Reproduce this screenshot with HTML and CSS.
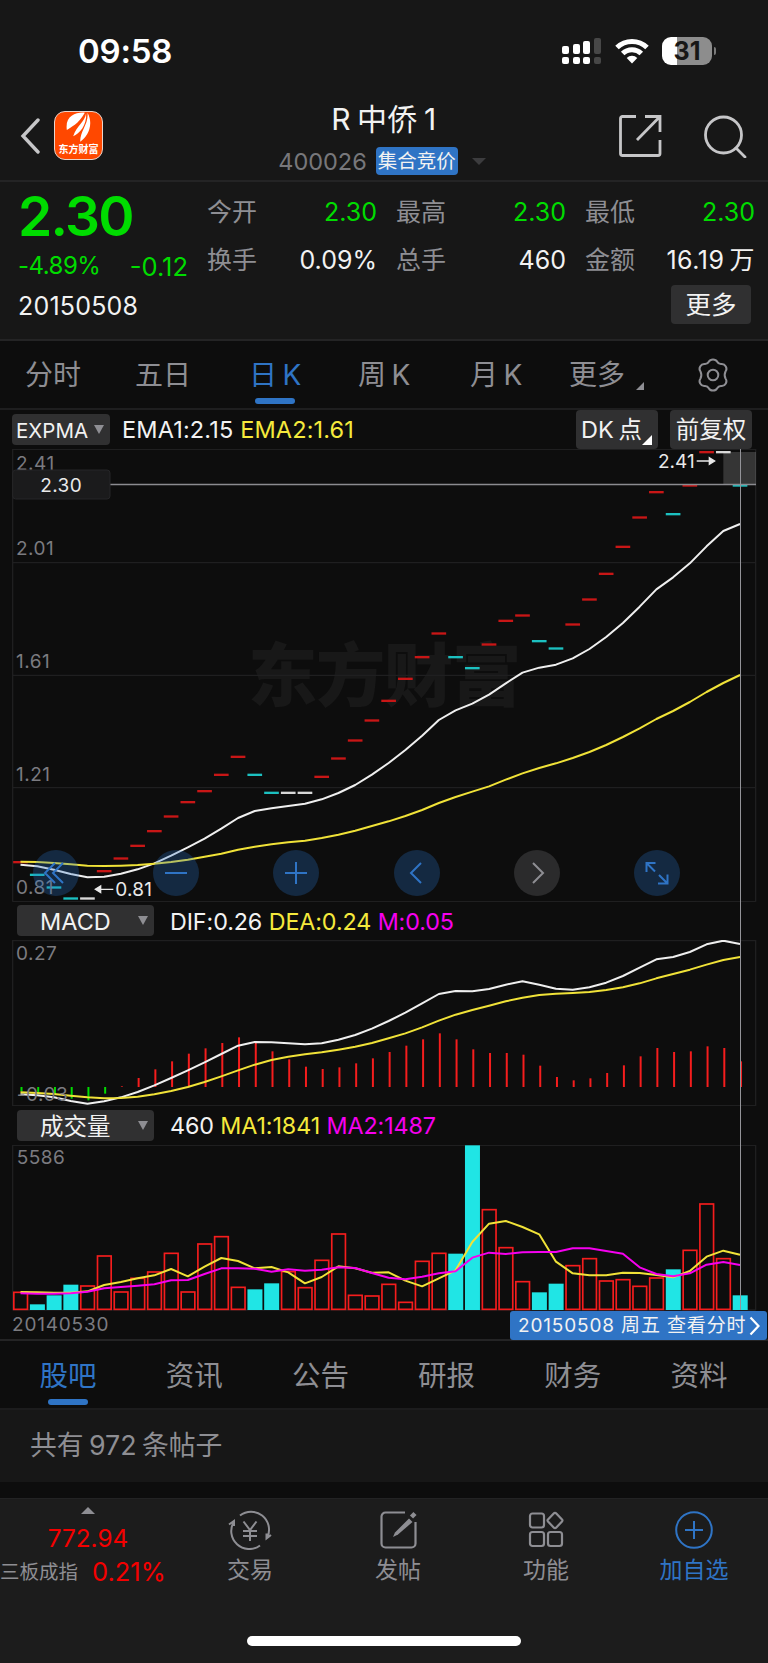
FILE: index.html
```html
<!DOCTYPE html>
<html lang="zh-CN">

<head>
    <meta charset="UTF-8">
    <meta name="viewport" content="width=device-width, initial-scale=1.0">
    <title>R中侨1 400026</title>
    <link rel="stylesheet" href="styles.css">
</head>

<body>
    <header class="top">
        <div class="status-bar">
            <span class="clock">09:58</span>
            <div class="status-icons">
                <svg class="signal" width="40" height="28" viewBox="0 0 40 28">
                    <g fill="#fff">
                        <rect x="0" y="9" width="7" height="8" rx="2" />
                        <rect x="11" y="7" width="7" height="10" rx="2" />
                        <rect x="21" y="4" width="7" height="13" rx="2" />
                        <rect x="0" y="20" width="7" height="7" rx="2" />
                        <rect x="11" y="20" width="7" height="7" rx="2" />
                        <rect x="21" y="20" width="7" height="7" rx="2" />
                    </g>
                    <g fill="#474747">
                        <rect x="32" y="1" width="7" height="16" rx="2" />
                        <rect x="32" y="20" width="7" height="7" rx="2" />
                    </g>
                </svg>
                <svg class="wifi" width="34" height="26" viewBox="0 0 34 26">
                    <g fill="none" stroke="#fff" stroke-width="5">
                        <path d="M2 9.5a21.5 21.5 0 0 1 30 0" />
                        <path d="M7.7 15.6a13.2 13.2 0 0 1 18.6 0" />
                    </g>
                    <path fill="#fff" d="M17 25.5l-5.3-5.6a7.6 7.6 0 0 1 10.6 0z" />
                </svg>
                <div class="battery"><span>31</span></div>
            </div>
        </div>
        <div class="nav">
            <div class="nav-left">
                <svg width="20" height="36" viewBox="0 0 20 36">
                    <path d="M18 2L3 18l15 16" fill="none" stroke="#c6c6c8" stroke-width="3.4" stroke-linecap="round" />
                </svg>
                <div class="logo">
                    <svg width="25" height="30" viewBox="64 36 74 90" fill="#fff">
                        <path d="M120 38C92 36 60 48 66 90C78 80 100 74 120 38z" />
                        <path d="M124 40C120 66 96 76 85 109C104 100 126 78 124 40z" />
                        <path d="M128 38C132 72 106 92 106 125C128 112 148 74 128 38z" />
                    </svg>
                    <span>东方财富</span>
                </div>
            </div>
            <div class="nav-title">
                <h1>R<i></i>中侨<i></i>1</h1>
                <div class="code-line">
                    <span class="code">400026</span>
                    <span class="badge">集合竞价</span>
                    <span class="down"></span>
                </div>
            </div>
            <div class="nav-right">
                <svg width="44" height="44" viewBox="0 0 44 44" fill="none" stroke="#c6c6c8" stroke-width="2.8">
                    <path d="M18 2.5H4.5a2 2 0 0 0-2 2v35a2 2 0 0 0 2 2H40a2 2 0 0 0 2-2V26" />
                    <path d="M27 2.5h15V18M42 2.5L19 26" />
                </svg>
                <svg width="44" height="44" viewBox="0 0 44 44" fill="none" stroke="#c6c6c8" stroke-width="2.8">
                    <circle cx="20.5" cy="21" r="18" />
                    <path d="M33 34l9 9" stroke-linecap="round" />
                </svg>
            </div>
        </div>
    </header>

    <section class="quote">
        <div class="price-box">
            <div class="price">2.30</div>
            <div class="change"><span>-4.89%</span><span class="diff">-0.12</span></div>
            <div class="date">20150508</div>
        </div>
        <div class="quote-info">
            <dl class="stats">
                <div><dt>今开</dt><dd class="green">2.30</dd></div>
                <div><dt>最高</dt><dd class="green">2.30</dd></div>
                <div><dt>最低</dt><dd class="green">2.30</dd></div>
                <div><dt>换手</dt><dd>0.09%</dd></div>
                <div><dt>总手</dt><dd>460</dd></div>
                <div><dt>金额</dt><dd class="amount">16.19<i></i>万</dd></div>
            </dl>
            <button class="more-btn">更多</button>
        </div>
    </section>

    <nav class="period-tabs">
        <a>分时</a>
        <a>五日</a>
        <a class="active">日<i></i>K</a>
        <a>周<i></i>K</a>
        <a>月<i></i>K</a>
        <a>更多<b class="corner"></b></a>
        <a class="gear">
            <svg width="34" height="34" viewBox="0 0 34 34" fill="none" stroke="#8e8e93" stroke-width="2">
                <path d="M12.800 3.800Q14 1.500 17 1.500T21.200 3.800Q22.500 6.300 25.500 6Q28.300 5.800 29.800 8.500T29.500 13.500Q27.800 17 29.500 20.500Q31.300 22.800 29.800 25.500T25.500 28Q22.500 27.700 21.200 30.200Q20 32.500 17 32.500T12.800 30.200Q11.500 27.700 8.500 28Q5.700 28.200 4.200 25.500T4.500 20.500Q6.200 17 4.500 13.500Q2.700 11.200 4.200 8.500T8.500 6Q11.500 6.300 12.800 3.800z" />
                <circle cx="17" cy="17" r="5.300" />
            </svg>
        </a>
    </nav>

    <main class="charts">
        <div class="bar bar-main">
            <button class="select select-main">EXPMA<b class="tri"></b></button>
            <p class="legend"><span>EMA1:2.15</span> <span class="yellow">EMA2:1.61</span></p>
            <button class="tool">DK<i></i>点<b class="corner"></b></button>
            <button class="tool">前复权</button>
        </div>
        <div class="price-chart">
            <svg id="price" width="768" height="453" viewBox="0 27 2304 1359">
                <text class="watermark" x="744" y="783" textLength="820">东方财富</text>
                <path class="grid" d="M38 27V1385M2267 27V1385M38 28H2267M38 368H2267M38 706H2267M38 1043H2267M38 1385H2267" />
                <g class="data"></g>
                <g class="axis">
                    <text x="48" y="90">2.41</text>
                    <text x="48" y="346">2.01</text>
                    <text x="48" y="685">1.61</text>
                    <text x="48" y="1024">1.21</text>
                    <text x="48" y="1363">0.81</text>
                </g>
                <rect x="2170" y="36" width="98" height="98" fill="#fff" fill-opacity=".17" />
                <path d="M330 133.500H2268" stroke="#8b8b90" stroke-width="4.500" />
                <rect x="38" y="90" width="292" height="87" rx="9" fill="#1b1b1c" stroke="#262628" stroke-width="3" />
                <g class="mark">
                    <text x="121" y="155" textLength="124">2.30</text>
                    <text x="1974" y="84" textLength="110">2.41</text>
                    <path d="M2090 63h38v-10l16 10-16 10v-10" />
                    <text x="346" y="1369" textLength="110">0.81</text>
                    <path d="M340 1348h-38v-10l-16 10 16 10v-10" />
                </g>
            </svg>
            <div class="controls">
                <button>
                    <svg viewBox="0 0 46 46"><path d="M22 13L12 23l10 10M30 13L20 23l10 10" /></svg>
                </button>
                <button>
                    <svg viewBox="0 0 46 46"><path d="M12 23h22" /></svg>
                </button>
                <button>
                    <svg viewBox="0 0 46 46"><path d="M12 23h22M23 12v22" /></svg>
                </button>
                <button>
                    <svg viewBox="0 0 46 46"><path d="M27 13L17 23l10 10" /></svg>
                </button>
                <button class="disabled">
                    <svg viewBox="0 0 46 46"><path d="M19 13l10 10-10 10" /></svg>
                </button>
                <button>
                    <svg viewBox="0 0 46 46"><path d="M12.500 22V13h9M12.500 13l8.500 8.500M24 33.500h9.500v-9M33.500 33.500L25 25" /></svg>
                </button>
            </div>
        </div>

        <div class="bar">
            <button class="select">MACD<b class="tri"></b></button>
            <p class="legend"><span>DIF:0.26</span> <span class="yellow">DEA:0.24</span> <span class="pink">M:0.05</span></p>
        </div>
        <svg id="macd" width="768" height="166" viewBox="0 150 2304 498">
            <path class="grid" d="M38 150V648M2267 150V648M38 152H2267M38 647H2267" />
            <g class="data"></g>
            <g class="axis">
                <text x="48" y="209">0.27</text>
                <text x="50" y="634">-0.03</text>
            </g>
        </svg>

        <div class="bar bar-volume">
            <button class="select">成交量<b class="tri"></b></button>
            <p class="legend"><span>460</span> <span class="yellow">MA1:1841</span> <span class="pink">MA2:1487</span></p>
        </div>
        <svg id="volume" width="768" height="166" viewBox="0 120 2304 498">
            <path class="grid" d="M38 120V616M2267 120V616M38 121H2267M38 615H2267" />
            <g class="data"></g>
            <g class="axis">
                <text x="50" y="178">5586</text>
            </g>
        </svg>
        <div class="cursor-line"></div>

        <div class="date-row">
            <span class="start">20140530</span>
            <a class="day-link"><span>20150508 周五 查看分时</span>
                <svg width="11" height="20" viewBox="0 0 11 20">
                    <path d="M1.500 1.500L9.500 10l-8 8.500" fill="none" stroke="#fff" stroke-width="2.200" />
                </svg>
            </a>
        </div>
    </main>

    <nav class="info-tabs">
        <a class="active">股吧</a>
        <a>资讯</a>
        <a>公告</a>
        <a>研报</a>
        <a>财务</a>
        <a>资料</a>
    </nav>
    <div class="posts">共有<i></i>972<i></i>条帖子</div>

    <footer class="bottom">
        <div class="bottom-row">
            <div class="index">
                <b class="up"></b>
                <span class="index-value">772.94</span>
                <div class="index-line"><span>三板成指</span><span class="red">0.21%</span></div>
            </div>
            <a class="action">
                <svg width="44" height="40" viewBox="0 0 44 40" fill="none" stroke="#8e8e93" stroke-width="2">
                    <path d="M12 5.500A18 18 0 0 1 39.500 27M43 25L38.500 28.500V23.500M32 35.500A18 18 0 0 1 6 11.500M1 14.500L6 11v5" />
                    <path d="M15.500 11.500L22 20l6.500-8.500M22 20v11M15 21h14M15 26h14" />
                </svg>
                <span>交易</span>
            </a>
            <a class="action">
                <svg width="44" height="40" viewBox="0 0 44 40" fill="none" stroke="#8e8e93" stroke-width="2.200">
                    <path d="M29 2.500H9.500a4 4 0 0 0-4 4v27a4 4 0 0 0 4 4h26a4 4 0 0 0 4-4V12" />
                    <path d="M33 8.500l3.500 3.500L22 24.500 17 27l2-4.500z" fill="#8e8e93" stroke="none" />
                    <path d="M35.500 7L39 3.500" stroke-width="4.500" />
                </svg>
                <span>发帖</span>
            </a>
            <a class="action">
                <svg width="44" height="40" viewBox="0 0 44 40" fill="none" stroke="#8e8e93" stroke-width="2.200">
                    <rect x="6" y="3.500" width="14" height="14" rx="2.500" />
                    <rect x="6" y="22" width="14" height="14" rx="2.500" />
                    <rect x="24" y="22" width="14" height="14" rx="2.500" />
                    <path d="M29.700 3.500L24 9.500a1.500 1.500 0 0 0 0 2l5.700 6a1.800 1.800 0 0 0 2.600 0l5.700-6a1.500 1.500 0 0 0 0-2l-5.700-6a1.800 1.800 0 0 0-2.600 0z" />
                </svg>
                <span>功能</span>
            </a>
            <a class="action active">
                <svg width="44" height="40" viewBox="0 0 44 40" fill="none" stroke="#2f74c5" stroke-width="2">
                    <circle cx="22" cy="20" r="17.800" />
                    <path d="M13 20h18M22 11v18" />
                </svg>
                <span>加自选</span>
            </a>
        </div>
        <div class="home-indicator"></div>
    </footer>
    <script src="script.js"></script>
</body>

</html>
```

FILE: styles.css
```css
:root {
    --blue: #2f74c5;
    --gray: #8e8e93;
    --green: #00dc00;
    --red: #f40000;
    --yellow: #f5e93c;
    --pink: #f500ee;
}

* {
    box-sizing: border-box;
}

body {
    width: 768px;
    height: 1663px;
    margin: 0;
    display: flex;
    flex-direction: column;
    background: #0d0d0d;
    color: #f2f2f2;
    font-family: Inter, "Noto Sans CJK SC", sans-serif;
    overflow: hidden;
}

h1,
p,
dl,
dd {
    margin: 0;
    font-weight: 400;
}

button {
    padding: 0;
    border: none;
    color: inherit;
    font-family: inherit;
}

svg {
    display: block;
    flex-shrink: 0;
}

/* thin gap between latin and chinese text */
i {
    display: inline-block;
    width: .2em;
}

.green {
    color: var(--green);
}

.red {
    color: var(--red);
}

.yellow {
    color: var(--yellow);
}

.pink {
    color: var(--pink);
}

/* header */
.top {
    height: 182px;
    background: #171717;
    border-bottom: 2px solid #242425;
}

.status-bar {
    height: 102px;
    padding: 0 56px 0 78px;
    display: flex;
    justify-content: space-between;
    align-items: center;
}

.clock {
    font-size: 33px;
    font-weight: 600;
    color: #fff;
    letter-spacing: -.2px;
}

.status-icons {
    display: flex;
    align-items: center;
    gap: 13px;
}

.battery {
    position: relative;
    width: 50px;
    height: 28px;
    border-radius: 9px;
    background: linear-gradient(90deg, #fff 31%, #8d8d8d 31%);
    color: #171717;
    font-size: 25px;
    font-weight: 700;
    line-height: 28px;
    text-align: center;
}

.battery::after {
    content: "";
    position: absolute;
    right: -4px;
    top: 10px;
    width: 2px;
    height: 8px;
    border-radius: 0 4px 4px 0;
    background: #7a7a7a;
}

.nav {
    height: 78px;
    padding: 0 20px;
    display: flex;
    justify-content: space-between;
}

.nav-left,
.nav-right {
    width: 142px;
    display: flex;
    align-items: center;
    padding-bottom: 11px;
}

.nav-left {
    gap: 14px;
}

.nav-right {
    justify-content: flex-end;
    gap: 41px;
    padding-right: 1px;
}

.logo {
    width: 49px;
    height: 49px;
    border: 1px solid #e8d4cc;
    border-radius: 11px;
    background: #ff4800;
    display: flex;
    flex-direction: column;
    align-items: center;
}

.logo span {
    margin-top: 1px;
    font-size: 10px;
    line-height: 13px;
    font-weight: 700;
    color: #fff;
}

.nav-title {
    display: flex;
    flex-direction: column;
    align-items: center;
}

.nav-title h1 {
    font-size: 30px;
    line-height: 34px;
    margin-bottom: 11px;
    letter-spacing: .5px;
}

.code-line {
    display: flex;
    align-items: center;
    height: 28px;
    margin-left: -4px;
}

.code {
    font-size: 23.500px;
    color: #77777b;
}

.badge {
    height: 28px;
    margin: 0 14px 0 9px;
    padding: 0 2px;
    border-radius: 4px;
    background: var(--blue);
    font-size: 19.500px;
    line-height: 28px;
}

.down {
    border: 7px solid transparent;
    border-top-color: #3c3c3e;
    border-bottom: 0;
}

/* quote */
.quote {
    height: 159px;
    background: #171717;
    border-bottom: 2px solid #242425;
    display: flex;
}

.price-box {
    width: 207px;
    padding: 7px 19px 0 18px;
}

.price {
    height: 52px;
    color: var(--green);
    font-size: 55px;
    font-weight: 600;
    line-height: 54px;
    letter-spacing: -1.700px;
}

.change {
    display: flex;
    justify-content: space-between;
    color: var(--green);
    font-size: 24px;
    line-height: 30px;
    margin-top: 10px;
    letter-spacing: -.5px;
}

.diff {
    font-size: 25.500px;
    line-height: 32px;
    margin-bottom: -2px;
    letter-spacing: 0;
}

.date {
    margin-top: 10px;
    font-size: 25px;
    line-height: 30px;
    letter-spacing: .2px;
}

.quote-info {
    flex: 1;
    padding: 6px 13px 0 0;
    display: flex;
    flex-direction: column;
    align-items: flex-end;
}

.stats {
    width: 100%;
    display: grid;
    grid-template-columns: repeat(3, 1fr);
    column-gap: 19px;
}

.stats div {
    height: 48px;
    display: flex;
    align-items: center;
    justify-content: space-between;
    font-size: 25px;
    line-height: 48px;
}

.stats dt {
    color: var(--gray);
}

.stats .amount {
    letter-spacing: .5px;
}

.more-btn {
    width: 80px;
    height: 39px;
    margin: 1px 4px 0 0;
    border-radius: 4px;
    background: #303031;
    font-size: 25.500px;
    line-height: 38px;
}

/* period tabs */
.period-tabs {
    height: 69px;
    border-bottom: 2px solid #1e1e1f;
    display: grid;
    grid-template-columns: 110px 114px 109px 112px 99px 127px 34px;
    padding-left: 25px;
    color: var(--gray);
    font-size: 28px;
    line-height: 68px;
}

.period-tabs a {
    position: relative;
    justify-self: start;
}

.active {
    color: var(--blue);
}

.period-tabs .active::after,
.info-tabs .active::after {
    content: "";
    position: absolute;
    left: 50%;
    bottom: 5px;
    width: 40px;
    height: 6px;
    margin-left: -20px;
    border-radius: 3px;
    background: var(--blue);
}

.period-tabs .gear {
    display: flex;
    align-items: center;
}

.period-tabs .corner {
    position: absolute;
    right: -19px;
    bottom: 19px;
    border: 4px solid var(--gray);
    border-top-color: transparent;
    border-left-color: transparent;
}

/* charts */
.charts {
    position: relative;
    height: 931px;
    border-bottom: 2px solid #242425;
}

.bar {
    height: 38px;
    padding: 0 16px 0 17px;
    display: flex;
    align-items: center;
}

.bar-main {
    height: 39px;
    padding-left: 12px;
    gap: 12px;
}

.bar-volume {
    height: 39px;
}

.select {
    position: relative;
    width: 137px;
    height: 31px;
    border-radius: 4px;
    background: #303031;
    font-size: 23.500px;
    line-height: 33px;
    text-align: left;
    padding-left: 23px;
}

.select-main {
    width: 98px;
    padding-left: 4px;
    font-size: 20.500px;
}

.tri {
    position: absolute;
    right: 6px;
    top: 11px;
    border: 5px solid transparent;
    border-top: 9px solid var(--gray);
    border-bottom: 0;
}

.legend {
    flex: 1;
    margin-left: 16px;
    font-size: 23.300px;
    line-height: 36px;
    padding-top: 2px;
    letter-spacing: -.1px;
    white-space: nowrap;
}

.bar-main .legend {
    margin-left: 0;
    font-size: 23.500px;
    letter-spacing: .15px;
}

.tool {
    position: relative;
    width: 82px;
    height: 39px;
    border-radius: 4px;
    background: #303031;
    font-size: 23.500px;
    line-height: 40px;
}

.tool:nth-of-type(2) {
    text-align: left;
    padding-left: 5px;
}

.tool .corner {
    position: absolute;
    right: 6px;
    bottom: 4px;
    border: 5.500px solid #fff;
    border-top-color: transparent;
    border-left-color: transparent;
}

.price-chart {
    position: relative;
    height: 453px;
}

.grid {
    fill: none;
    stroke: #1f1f20;
    stroke-width: 4;
}

.watermark {
    fill: #181818;
    font-size: 208px;
    font-weight: 900;
}

.axis {
    fill: #7b7b80;
    font-size: 57px;
    letter-spacing: 1.500px;
}

.mark {
    fill: #e9e9e9;
    font-size: 57px;
}

.mark path {
    stroke: #e9e9e9;
    stroke-width: 4;
}

.line {
    fill: none;
    stroke-width: 6;
    stroke-linejoin: round;
}

.controls {
    position: absolute;
    left: 33px;
    bottom: 6px;
    display: flex;
    gap: 74.200px;
}

.controls button {
    width: 46px;
    height: 46px;
    border-radius: 50%;
    background: rgba(41, 115, 202, .28);
}

.controls svg {
    fill: none;
    stroke: var(--blue);
    stroke-width: 2;
}

.controls .disabled {
    background: #2b2b2c;
}

.controls .disabled svg {
    stroke: var(--gray);
}

.cursor-line {
    position: absolute;
    left: 739.500px;
    top: 39px;
    width: 1px;
    height: 861px;
    background: #939398;
}

.date-row {
    height: 29px;
    padding: 0 1px 0 12px;
    display: flex;
    justify-content: space-between;
    font-size: 19px;
    line-height: 28px;
}

.start {
    color: #7b7b80;
    letter-spacing: .8px;
}

.day-link {
    position: relative;
    width: 257px;
    height: 29px;
    padding: 2px 7px 0 8px;
    border-radius: 3px;
    background: var(--blue);
    display: flex;
    align-items: center;
    justify-content: space-between;
    white-space: nowrap;
    letter-spacing: .85px;
}

/* info tabs */
.info-tabs {
    height: 69px;
    padding: 0 6px 0 5px;
    border-bottom: 2px solid #1c1c1d;
    display: flex;
    color: var(--gray);
    font-size: 28.500px;
    line-height: 70px;
    text-align: center;
}

.info-tabs a {
    position: relative;
    flex: 1;
}

.info-tabs .active {
    color: var(--blue);
}

.info-tabs .active::after {
    bottom: 3px;
}

.posts {
    height: 73px;
    padding-left: 30px;
    background: #171717;
    color: var(--gray);
    font-size: 26.800px;
    line-height: 71px;
}

/* bottom bar */
.bottom {
    margin-top: 16px;
    height: 165px;
    background: #1c1c1c;
    border-top: 1px solid #232324;
    display: flex;
    flex-direction: column;
    justify-content: space-between;
    align-items: center;
}

.bottom-row {
    width: 100%;
    display: flex;
}

.index {
    width: 176px;
    padding-top: 8px;
    display: flex;
    flex-direction: column;
    align-items: center;
}

.up {
    border: 7px solid transparent;
    border-bottom-color: var(--gray);
    border-top: 0;
}

.index-value {
    margin-top: 8px;
    color: var(--red);
    font-size: 24.300px;
    line-height: 32px;
}

.index-line {
    width: 100%;
    display: flex;
    gap: 14px;
    align-items: center;
    color: var(--gray);
    font-size: 19.500px;
    line-height: 36px;
    white-space: nowrap;
}

.index-line .red {
    color: var(--red);
    font-size: 25.500px;
}

.action {
    width: 148px;
    padding-top: 11px;
    display: flex;
    flex-direction: column;
    align-items: center;
    color: var(--gray);
    font-size: 23px;
    line-height: 40px;
}

.action.active {
    color: var(--blue);
}

.home-indicator {
    width: 274px;
    height: 10px;
    margin-bottom: 17px;
    border-radius: 5px;
    background: #fff;
}
```

FILE: script.js
```js
const STEP = 50.2
const FIRST = 61.5
const RED = "#c81616"
const BRIGHT_RED = "#f51d1d"
const CYAN = "#20e5e5"
const YELLOW = "#f0e238"
const PINK = "#f500ee"

// indexes of the falling and the flat days, every other day rises
const falling = [1, 2, 3, 14, 15, 26, 27, 31, 32, 39, 43]
const flat = [4, 16, 17, 42]

const close = [1266, 1304, 1342, 1375, 1375, 1293, 1255, 1217, 1173, 1129, 1086, 1053, 1004, 950, 1004, 1058, 1058, 1058, 1010, 955, 901, 841, 782, 716, 651, 580, 651, 684, 613, 542, 526, 603, 625, 553, 478, 401, 320, 232, 156, 222, 136, 36, 36, 136]
const ema1 = [1274, 1279, 1289, 1302, 1312, 1310, 1301, 1288, 1270, 1247, 1222, 1196, 1166, 1134, 1113, 1105, 1098, 1091, 1078, 1059, 1035, 1004, 969, 930, 887, 840, 811, 791, 764, 730, 698, 683, 674, 655, 627, 591, 549, 500, 448, 412, 370, 319, 273, 252]
const ema2 = [1265, 1266, 1269, 1273, 1277, 1278, 1277, 1275, 1271, 1266, 1259, 1250, 1241, 1229, 1220, 1213, 1207, 1202, 1194, 1184, 1172, 1158, 1144, 1128, 1110, 1089, 1071, 1055, 1039, 1019, 1000, 984, 970, 954, 936, 915, 891, 865, 837, 813, 786, 756, 729, 705]

const dif = [613, 616, 622, 633, 641, 634, 622, 606, 586, 564, 541, 517, 492, 467, 456, 457, 460, 463, 460, 449, 435, 416, 393, 368, 340, 312, 303, 304, 297, 284, 274, 284, 296, 299, 292, 278, 258, 233, 208, 201, 186, 163, 152, 162]
const dea = [607, 609, 612, 617, 622, 625, 624, 620, 613, 603, 591, 576, 559, 541, 524, 510, 500, 493, 487, 479, 470, 459, 445, 430, 412, 392, 374, 360, 347, 334, 323, 315, 311, 309, 306, 300, 292, 280, 265, 252, 239, 224, 210, 201]
const macd = [604, 606, 613, 626, 631, 611, 589, 564, 538, 514, 491, 475, 459, 442, 457, 484, 508, 530, 537, 532, 520, 505, 486, 467, 448, 430, 448, 478, 489, 489, 494, 527, 561, 571, 565, 549, 526, 499, 474, 486, 484, 469, 474, 514]

const volume = [560, 598, 571, 539, 541, 451, 559, 518, 499, 443, 559, 415, 393, 545, 553, 535, 498, 546, 464, 385, 569, 571, 536, 590, 467, 443, 446, 121, 312, 426, 528, 562, 536, 480, 459, 526, 522, 542, 517, 493, 434, 295, 459, 571]
const ma1 = [561, 562, 563, 563, 559, 540, 531, 520, 511, 492, 514, 485, 459, 468, 490, 486, 502, 535, 516, 484, 490, 503, 502, 527, 544, 520, 496, 411, 356, 348, 366, 388, 470, 505, 511, 511, 503, 504, 510, 517, 498, 455, 437, 449]
const ma2 = [565, 566, 566, 565, 560, 550, 546, 542, 538, 526, 525, 507, 490, 490, 491, 500, 493, 497, 494, 487, 489, 504, 518, 523, 515, 505, 499, 458, 443, 447, 442, 441, 441, 430, 430, 438, 446, 487, 507, 514, 505, 479, 471, 480]

function x(i) {
    return FIRST + i * STEP
}

function line(values, color) {
    let points = values.map((y, i) => `${x(i)},${y}`).join(" ")
    return `<polyline class="line" points="${points}" stroke="${color}" />`
}

function draw(id, html) {
    document.querySelector(`#${id} .data`).innerHTML = html
}

// every day opens and closes at one price, so a candle is only a dash
let candles = close.map((y, i) => {
    let color = falling.includes(i) ? "#1cc0c0" : flat.includes(i) ? "#d8d8d8" : RED
    return `<rect x="${x(i) - 22}" y="${y - 3}" width="44" height="7" fill="${color}" />`
}).join("")
draw("price", candles + line(ema1, "#efefef") + line(ema2, YELLOW))

let sticks = macd.map((y, i) => {
    let color = y > 591 ? "#00dc00" : BRIGHT_RED
    return `<path d="M${x(i) + 3} 591V${y}" stroke="${color}" stroke-width="6" />`
}).join("")
draw("macd", sticks + line(dif, "#efefef") + line(dea, YELLOW))

let bars = volume.map((y, i) => {
    if (falling.includes(i)) {
        return `<rect x="${x(i) - 22}" y="${y}" width="45" height="${615 - y}" fill="${CYAN}" />`
    }
    return `<rect x="${x(i) - 20}" y="${y + 2}" width="41" height="${611 - y}" fill="none" stroke="${BRIGHT_RED}" stroke-width="5" />`
}).join("")
draw("volume", bars + line(ma1, YELLOW) + line(ma2, PINK))
```
